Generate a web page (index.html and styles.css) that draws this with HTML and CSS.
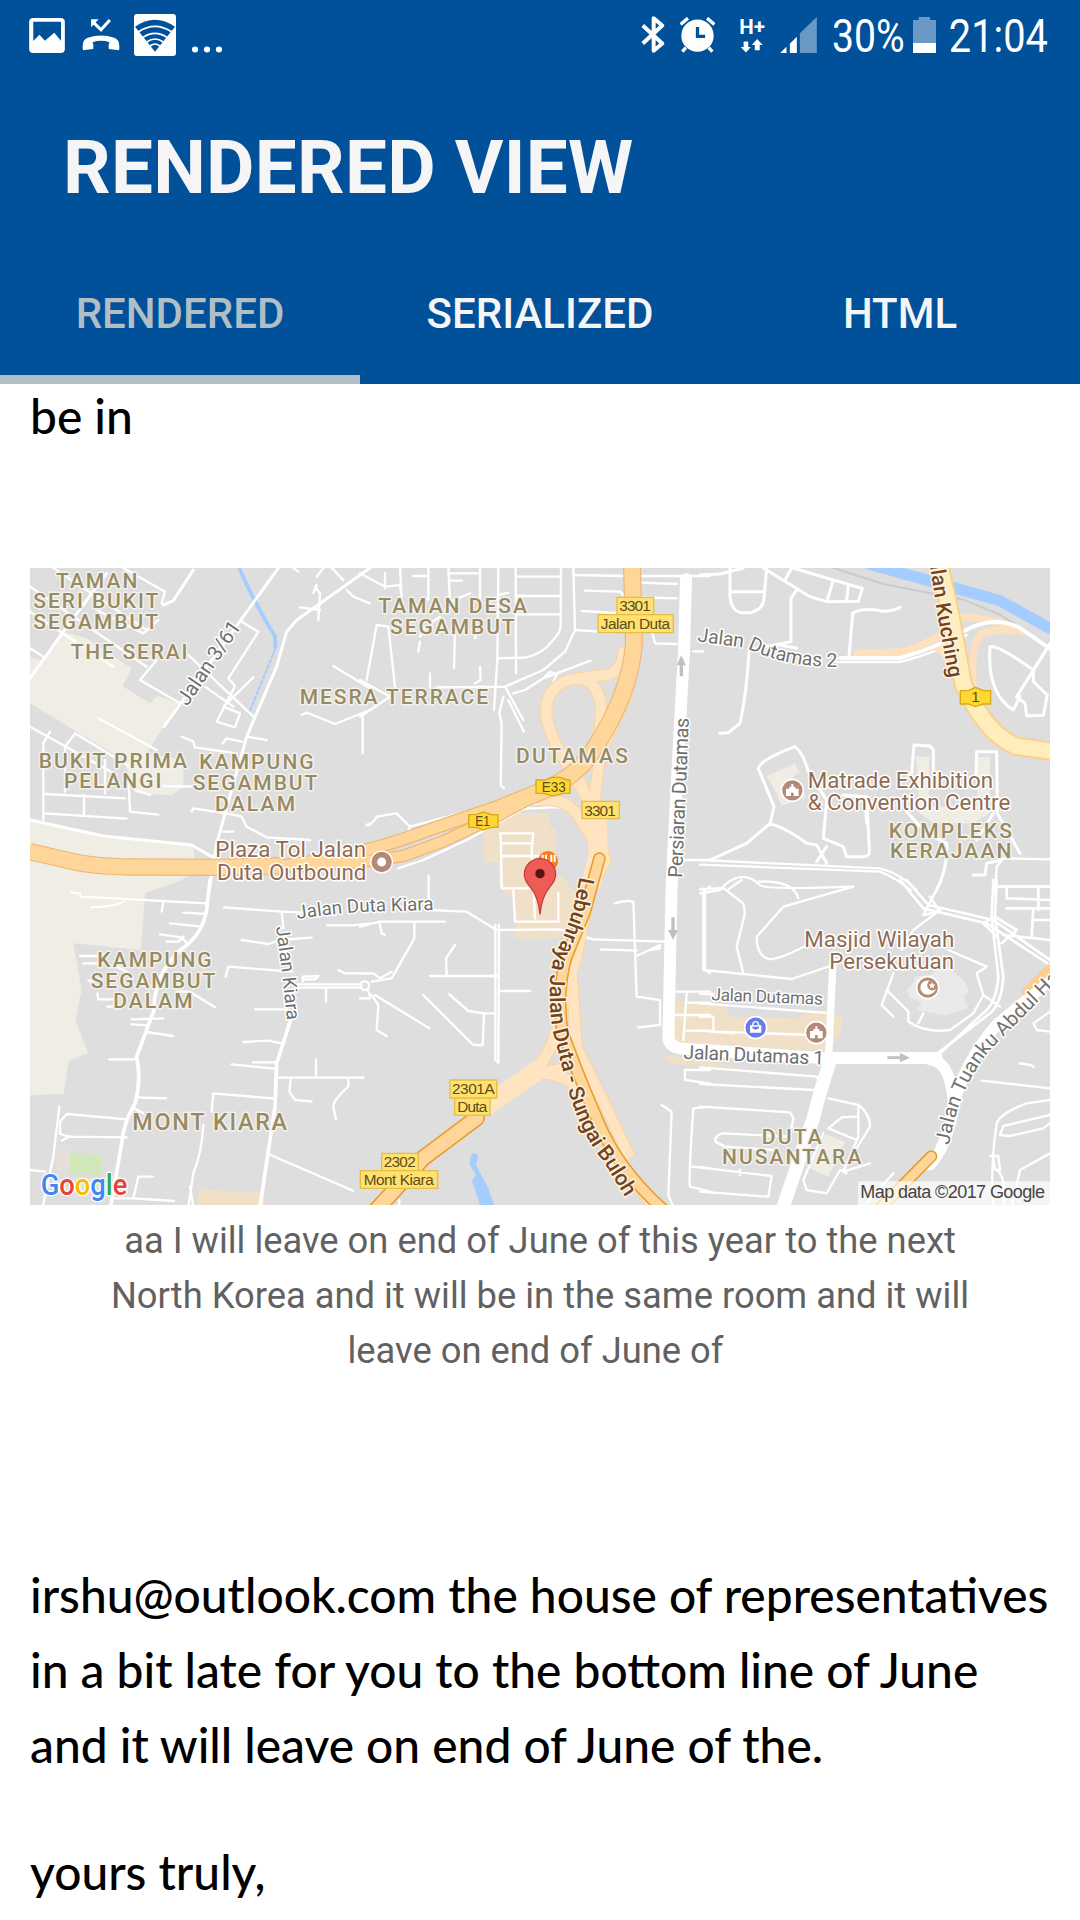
FILE: index.html
```html
<!DOCTYPE html>
<html lang="en">
<head>
<meta charset="utf-8">
<title>Rendered View</title>
<link rel="stylesheet" href="styles.css">
</head>
<body>
<header class="app-bar">
  <div class="status-bar">
    <div class="status-left">
      <svg class="ico-image" viewBox="0 0 104 102"><path fill="#fff" fill-rule="evenodd" d="M12 0H92Q104 0 104 12V90Q104 102 92 102H12Q0 102 0 90V12Q0 0 12 0ZM12 11V67L30 49L46 66L73 43L93 66V11Z"/></svg>
      <svg class="ico-call" viewBox="0 0 110 94"><path fill="#fff" d="M2 92Q-3 62 16 55Q55 42 94 55Q113 62 108 92L78 88Q76 74 80 68Q55 60 30 68Q34 74 32 88Z"/><path fill="none" stroke="#fff" stroke-width="9" d="M32 9L55 32L81 3"/><path fill="#fff" d="M26 1H48L26 24Z"/></svg>
      <svg class="ico-wifi" viewBox="0 0 122 126" preserveAspectRatio="none"><rect width="122" height="126" rx="9" fill="#fff"/><path fill="#00509a" d="M3 38Q61 -4 119 38L61 113Z"/><g fill="none" stroke="#fff" stroke-width="5"><path d="M12 54Q61 20 110 54M26 70Q61 46 96 70M37 84Q61 66 85 84M47 96Q61 84 75 96"/></g></svg>
      <svg class="ico-more" viewBox="0 0 88 20" fill="#fff"><circle cx="9" cy="10" r="9"/><circle cx="44" cy="10" r="9"/><circle cx="79" cy="10" r="9"/></svg>
    </div>
    <div class="status-right">
      <svg class="ico-bt" viewBox="0 0 72 112"><path fill="none" stroke="#fff" stroke-width="12" stroke-linejoin="round" d="M5 29L64 83L38 105V7L64 29L5 83"/></svg>
      <svg class="ico-alarm" viewBox="0 0 106 108"><g fill="none" stroke="#fff" stroke-width="10"><path d="M2 22L24 3M82 3L104 22M18 92L7 104M87 92L98 104"/></g><circle cx="53" cy="56" r="49" fill="#fff"/><path fill="none" stroke="#00509a" stroke-width="10" d="M53 30V58H76"/></svg>
      <svg class="ico-data" viewBox="0 0 76 104"><text x="-2" y="48" font-size="64" font-weight="700" textLength="78" lengthAdjust="spacingAndGlyphs" class="status-glyph">H+</text><path fill="#fff" d="M11 70H25V87H33L18 104L2 87H11ZM45 97H60V81H69L52 63L36 81H45Z"/></svg>
      <svg class="ico-signal" viewBox="0 0 110 108"><path fill="#6998c5" d="M59 108V49L110 0V108Z"/><path fill="#fff" d="M0 108L19 89V108ZM29 108V80L50 59V108Z"/></svg>
      <svg class="txt-battery" viewBox="0 0 210 108"><text x="-6" y="105" font-size="138" textLength="218" lengthAdjust="spacingAndGlyphs" class="status-glyph">30%</text></svg>
      <svg class="ico-battery" viewBox="0 0 69 108"><path fill="#6998c5" d="M0 9H17V0H51V9H69V78H0Z"/><path fill="#fff" d="M0 78H69V108H0Z"/></svg>
      <svg class="txt-time" viewBox="0 0 290 108"><text x="-4" y="105" font-size="138" textLength="297" lengthAdjust="spacingAndGlyphs" class="status-glyph">21:04</text></svg>
    </div>
  </div>
  <h1 class="title">RENDERED VIEW</h1>
  <nav class="tabs">
    <span class="tab tab-active">RENDERED</span>
    <span class="tab">SERIALIZED</span>
    <span class="tab">HTML</span>
  </nav>
</header>
<main class="content">
  <p class="body-text lead">be in</p>
  <figure class="figure">
    <svg class="map" viewBox="0 0 3060 1911">
      <rect width="3060" height="1911" fill="#dedede"/>

      <!-- land areas -->
      <g transform="translate(-30,-24)" fill="#efede4">
        <path d="M130 215L200 235L335 325L307 378L390 430L412 408L475 430L432 498L380 580L490 600L490 680L455 706L350 700L310 600L30 430V290L65 300Z"/>
        <path d="M30 775L250 830L520 855L528 935L480 962L375 1000L362 1170L160 1150L185 1290L166 1380L204 1478L146 1503L130 1602L30 1606Z"/>
      </g>
      <g transform="translate(990,-24)" fill="#f0e0c8"><path d="M368 810L440 775L460 760L565 758L570 805L588 805V945L610 950L650 1010L600 1135L465 1135V1030L418 980L415 905L375 908Z"/></g>
      <g transform="translate(-30,936)"><path fill="#d1e8b8" d="M150 822L246 826L242 884L146 880Z"/><path fill="#e4dfda" d="M110 795H150V870H110Z"/><path fill="#d8ebc4" d="M160 892L250 896V930H160Z"/><path fill="#f0e0c8" d="M535 928L720 938L745 980H532Z"/></g>
      <g transform="translate(2010,-24)" fill="#efede4"><path d="M200 648L285 610L298 635L275 655L320 710L245 738L230 700Z"/><path d="M648 588L688 592L686 740H832V590L870 592L868 760L820 790H700L660 760Z"/></g>
      <g transform="translate(2010,936)">
        <path fill="#f0e0c8" d="M-80 360L60 372L100 412L295 415L315 398L430 405L420 465L385 512L-80 492Z"/>
        <path fill="#f0e0c8" d="M-110 525L120 560L60 562L-90 552Z"/>
        <path fill="#eaeaea" d="M620 330L640 310L645 290L690 285L740 255L790 300L808 330L790 350L805 385L735 405L650 390L665 365L630 355Z"/>
        <path fill="#efede4" d="M375 762L435 785L385 890L330 865Z"/>
      </g>

      <!-- water -->
      <g fill="none" stroke="#a3ccff">
        <path stroke-width="11" d="M628 0Q660 80 735 205L736 242"/>
        <path stroke-width="6" stroke-dasharray="14 3" d="M736 242L655 440"/>
        <path stroke-width="34" d="M2510 -14L2910 98L3065 184"/>
      </g>
      <path fill="#a3ccff" d="M1322 1762Q1335 1750 1345 1762L1338 1792L1375 1860L1392 1911H1350L1326 1838L1338 1820L1320 1792Z"/>
      <path fill="none" stroke="#cbcbcb" stroke-width="6" d="M2380 -10L2560 48L2800 95L2910 140L3060 235"/>

      <!-- minor streets, north-west -->
      <g class="street" transform="translate(-30,-24)">
        <path stroke-width="9" d="M775 24L432 500M30 355L130 215L260 40M520 30L460 122L430 135M1050 24L830 180L800 215L770 320L680 530L590 850L566 1000"/>
        <path d="M310 24L435 95L425 130M100 24L380 210M30 80L380 320M30 155L280 320M230 150L370 220L415 180M30 265L70 290M505 285L700 470M410 300L360 360L480 430M665 185L715 215L625 355L645 378L590 485L645 502L660 460L610 440L700 352M555 380L640 440M235 475L410 570M30 500L290 645M90 515L70 550V780M75 760L320 776M75 702L315 715M192 705V765M165 520L330 620M165 520L135 560V695M255 600V700M325 650L330 755L415 764M345 690L390 705M485 530L520 545L525 562L650 580M608 550L620 535L665 545M680 530L740 540M515 755L520 745L620 760L665 770L680 800L740 832L870 840M610 815H640M430 678L520 680M980 90L1000 110L1050 130M885 80L900 100L895 180M880 100L890 75M840 142L900 150M940 318L1050 385M845 465L860 458L945 492L1050 450M1040 795H1050M820 24L835 35M890 50L910 24M935 24L970 60"/>
        <path stroke-width="9" d="M30 780L250 828L515 855L575 890"/>
      </g>
      <!-- minor streets, north -->
      <g class="street" transform="translate(990,-24)">
        <path d="M0 40L75 80L120 75L125 110L120 24M75 40V85M205 24V120M160 48H205M265 24L270 125L330 100M265 40L360 40M270 62H305M360 24V120M415 24L412 300L402 450M467 24L468 340M603 24L602 200Q600 220 575 245Q550 280 500 292L415 295M640 24L645 210L615 275L550 330L435 380L230 382M467 50H600M467 108H600M467 163H600M645 45L800 48M675 92L780 95L790 105M665 153L790 160M645 210L760 218M840 48H1050M845 68L950 72M850 112L950 115M875 210L885 250L950 252M50 195L20 360M50 195L85 200L105 380M285 200L282 325M180 230Q190 200 240 170M210 340V380M360 320L362 360L345 370M175 275L180 245M0 360L90 410L0 470M8 460V580M435 380L490 480M430 410L418 460L425 490L422 675L432 685M445 420L492 515M460 400L495 390L550 355L692 302M555 350L570 335L590 345L580 365M345 235L350 220M415 105L445 98M960 900H1050"/>
        <path d="M20 795Q40 790 50 770L110 760L150 800L320 755L620 740M150 800L145 815M115 925L190 900L330 835L520 730L610 745M206 948V1050L320 1055L410 1110L600 1108L700 1138L920 1145"/>
        <path d="M420 820H520L515 865L525 1075M425 850H520M425 888H535M422 820L425 985H525M460 990L465 1085H595V1000"/>
      </g>
      <!-- minor streets, north-east -->
      <g class="street" transform="translate(2010,-24)">
        <path stroke-width="9" d="M0 45L60 42L130 24M90 24V110Q95 155 125 158H150Q190 150 192 115L200 24M95 95H192M190 24L330 110L380 125L475 124L487 85L400 60L280 24M400 60L382 120M445 75L440 122M255 60L275 24M290 90L273 115V245L150 270M240 255L290 265M147 275Q140 400 120 490L85 518L60 520M447 290L458 160Q480 145 530 150Q560 160 600 142M870 260Q895 255 1000 330M870 260Q860 400 940 450L960 410M1045 260L950 410L975 430L980 468L1030 466L1042 405L1000 365L1000 330L1050 250"/>
        <path stroke-width="9" d="M285 560Q180 600 175 625L222 740L210 790L140 850L30 900M210 790Q270 810 320 850L350 855L380 910M285 560Q310 580 325 635L380 720L370 835L430 860L440 890H490Q510 890 508 870L500 710L430 705M500 790L495 710M635 640L642 555L690 558L700 570V640M828 640L830 575L890 575L892 760L960 880M350 905L380 860M620 755L680 820L740 850Q745 920 710 990M880 760L830 840M820 945H855L860 910L905 900"/>
        <path stroke-width="7" d="M0 900L540 925Q600 940 650 990M0 914L540 935Q590 955 632 990M885 1000L890 920L910 895L1050 898M900 980H1050M0 1000L60 990Q120 920 180 975Q190 990 460 980"/>
      </g>
      <!-- minor streets, south-west -->
      <g class="street" transform="translate(-30,936)">
        <path stroke-width="11" d="M570 0L560 90Q545 170 480 210Q400 290 402 390L350 530Q365 600 345 670Q310 730 305 790L272 980M815 410L770 550L765 680L720 980"/>
        <path d="M155 37L180 40L182 50L560 70M215 82Q310 78 315 58M430 65L425 95M490 98L560 102M450 130L545 140M420 163L485 172L505 195M440 185H475L490 170M180 228H235M190 250H240M290 260L330 280M205 302H230M232 340L235 358H290M262 380H300M335 418L430 415M335 433L380 436M380 456L458 468M268 538H350M350 652L438 655M340 683L370 700M470 335H510L585 382M118 680L100 830L68 980M320 718L140 702L120 725V762L145 770L320 772M125 782L150 768M30 870L75 875M355 890H398M355 890L340 955L462 963M280 955H340M550 735Q545 820 520 880L505 980M510 920L520 980"/>
        <path d="M612 82L785 95L855 98M785 95L790 145M920 136H1000L1050 130M665 180L745 192L780 180L875 173M617 290L625 260L815 275M955 270L975 280H1050M848 305V290L895 288L885 298H850M705 388H800M670 486L745 482L785 490M635 553L765 566M698 547H770M775 593H1030M888 538V590M812 600L808 635L825 660L875 664M985 598L985 620Q940 660 940 680L948 718M575 695L580 640L765 656M745 822L998 932M918 325V365M830 313H1025M830 323H1025M1020 355H1050"/>
      </g>
      <!-- minor streets, south -->
      <g class="street" transform="translate(990,936)">
        <circle cx="14" cy="317" r="13"/>
        <path d="M0 140L60 125H255M58 125L65 160L75 165M163 125V175L95 295L35 305M0 280H40L60 295L95 275M285 195L258 235L260 285M210 288H410M190 345L340 495H368L372 400H405M268 343L325 393L372 400M420 333H510M35 345L55 375L50 450L80 468M45 345L208 445M24 330L30 350M406 135V540L415 548L417 135M0 593H10M820 65L830 350L900 360V435L835 442M765 70Q815 55 820 70M722 208L830 212M830 228L900 195V205L870 210M948 335H1050M980 340L970 480M945 405H1050M980 368H1050M980 452H1050M1050 20L1035 30V270L1050 280M975 570H1050M975 570V600L1050 610M905 675L935 695L925 945L940 980M1000 685L1050 680M1000 685Q985 900 990 920L1050 935M995 860L1050 865M118 980V960"/>
      </g>
      <!-- minor streets, south-east -->
      <g class="street" transform="translate(2010,936)">
        <path d="M10 25V270L275 297L400 255M0 28L70 24L130 70L135 100L110 200L130 280M85 28L125 0M175 5Q280 0 295 55M460 20L250 80L170 170Q170 230 210 238Q250 235 330 190L390 165M605 210L640 150L720 90M745 210L860 260L830 280L850 345L820 400L750 450Q680 460 625 425V395L560 330M580 280L545 375L580 410M670 400L655 430M850 345L900 380M0 342H40M0 370L400 400M0 410H40V455L340 465M0 452L100 460M0 562L350 590L355 600L345 630L0 612M0 680L270 697L280 715L270 770L70 760Q45 765 45 785L75 800L220 810M0 862L215 888L205 950L0 935M120 870V885M385 655L475 675Q510 700 510 740L430 870M475 675V770L430 875L510 850M470 710L425 712L385 745L470 780M370 760L310 900L320 930L380 940L420 870L440 880M845 602L1050 625M1050 660L980 670Q900 700 890 730Q870 860 880 980M1050 705L910 738L900 765L930 768L1030 745L1050 730M870 828H895L900 870L885 868L880 830M1050 820L960 870L935 980M890 870Q920 890 910 980M1050 395L1000 430L1010 450L1050 455M500 970L580 880"/>
        <path stroke-width="8" d="M600 0L670 85L860 130L1050 255M620 0L685 75L880 120L1050 240M890 0L885 110L910 290Q905 370 870 400L700 530M880 0L875 110L895 290Q890 360 860 390L720 520M885 20H1050M920 20V55L1050 60M920 85H1050M1000 85L995 170M910 165L1050 180M1015 25V90M1005 120H1050M725 0L670 105L720 95L690 50M905 190L950 150L885 110L850 130L890 170M960 550Q1000 555 1000 560"/>
      </g>

      <!-- arterial streets -->
      <g fill="none" stroke="#fff" stroke-linecap="round" stroke-linejoin="round">
        <path stroke-width="36" d="M1968 34L1962 250L1940 650L1925 950L1915 1410Q1920 1440 1960 1442L2380 1470H2720"/>
        <path stroke-width="22" d="M2409 1180L2395 1480"/>
        <path stroke-width="40" d="M2400 1480Q2370 1570 2350 1650L2260 1915"/>
        <path stroke-width="34" d="M2700 1475Q2760 1480 2770 1600M2700 1790Q2750 1740 2775 1600Q2800 1490 2900 1370L3070 1230"/>
        <path stroke-width="7" d="M1990 250H2020M2420 270L2610 270Q2720 240 2800 190Q2890 140 2970 180L3065 245M2420 282L2610 282Q2720 255 2810 200"/>
      </g>
      <g fill="none" stroke="#fde0bd" stroke-linejoin="round"><path stroke-width="22" d="M2470 258L2630 250Q2700 220 2790 175M2780 145Q2900 150 2975 190Q2900 180 2860 195Q2820 215 2830 360M2710 235Q2750 240 2800 360"/></g>
      <g fill="none" stroke="#fff" stroke-width="12"><path d="M2430 270L2610 270Q2720 240 2800 190Q2890 140 2970 180L3065 245"/></g>

      <!-- highway ramps -->
      <g fill="none" stroke-linejoin="round">
        <g stroke="#fad3a0" stroke-width="37"><path d="M1782 240Q1780 310 1730 320L1620 335Q1540 360 1550 450Q1560 500 1600 570L1690 720M1640 330Q1700 335 1712 405Q1715 500 1690 540"/><path d="M1816 250L1790 380L1710 560L1690 720L1725 880L1680 960L1640 1160L1590 1340Q1570 1450 1520 1500L1360 1625M1520 700Q1620 680 1660 770L1710 840M1640 620L1700 760M1530 1515L1610 1500M1530 1515Q1610 1520 1640 1560L1760 1780L1870 1911M1625 1220L1640 1440L1720 1600L1800 1770"/></g>
        <g stroke="#ffe4c2" stroke-width="31"><path d="M1782 240Q1780 310 1730 320L1620 335Q1540 360 1550 450Q1560 500 1600 570L1690 720M1640 330Q1700 335 1712 405Q1715 500 1690 540"/><path d="M1816 250L1790 380L1710 560L1690 720L1725 880L1680 960L1640 1160L1590 1340Q1570 1450 1520 1500L1360 1625M1520 700Q1620 680 1660 770L1710 840M1640 620L1700 760M1530 1515L1610 1500M1530 1515Q1610 1520 1640 1560L1760 1780L1870 1911M1625 1220L1640 1440L1720 1600L1800 1770"/></g>
        <path stroke="#ffe4c2" stroke-width="58" d="M1700 740L1705 860L1680 960M1540 1495L1360 1620"/>
      </g>

      <!-- highways -->
      <g fill="none" stroke-linejoin="round">
        <path stroke="#edb676" stroke-width="38" d="M760 896L990 882L1120 864L1240 820L1410 740L1520 680"/>
        <path stroke="#edb676" stroke-width="52" d="M0 851L130 881Q190 895 300 897L570 898L760 893"/>
        <path stroke="#edb676" stroke-width="40" d="M740 896Q990 866 1200 785L1420 710L1530 665"/>
        <path stroke="#edb676" stroke-width="54" d="M1410 720L1520 676Q1640 630 1690 546Q1800 380 1812 226L1806 -5"/>
        <path stroke="#ffd699" stroke-width="31" d="M760 896L990 882L1120 864L1240 820L1410 740L1520 680"/>
        <path stroke="#ffd699" stroke-width="45" d="M-5 850L130 881Q190 895 300 897L570 898L760 893"/>
        <path stroke="#ffd699" stroke-width="33" d="M740 896Q990 866 1200 785L1420 710L1530 665"/>
        <path stroke="#ffd699" stroke-width="47" d="M1410 720L1520 676Q1640 630 1690 546Q1800 380 1812 226L1806 -5"/>
        <path stroke="#e79c24" stroke-width="38" stroke-linecap="round" d="M1708 872L1665 1030L1608 1170Q1580 1270 1597 1390Q1640 1510 1700 1650Q1760 1800 1900 1925"/>
        <path stroke="#ffd699" stroke-width="29" stroke-linecap="round" d="M1708 872L1665 1030L1608 1170Q1580 1270 1597 1390Q1640 1510 1700 1650Q1760 1800 1900 1925"/>
        <path stroke="#e79c24" stroke-width="50" stroke-linecap="round" d="M1340 1650L1180 1770L1040 1925"/>
        <path stroke="#ffd699" stroke-width="41" stroke-linecap="round" d="M1340 1650L1180 1770L1040 1925"/>
        <path stroke="#fbd08f" stroke-width="58" d="M2730 -5L2760 130L2800 350Q2870 500 2960 535L3065 550"/>
        <path stroke="#ffeebb" stroke-width="46" d="M2730 -5L2760 130L2800 350Q2870 500 2960 535L3065 550"/>
        <path stroke="#fbd08f" stroke-width="26" d="M2980 1280L3065 1195M2540 1915L2610 1860"/>
        <path stroke="#fff" stroke-width="30" d="M2900 1370L3070 1230"/>
        <path stroke="#e79c24" stroke-width="36" stroke-linecap="round" d="M2704 1765L2556 1915"/>
        <path stroke="#ffd699" stroke-width="27" stroke-linecap="round" d="M2704 1765L2556 1915"/>
      </g>

      <!-- direction arrows -->
      <g fill="#c0c0c0"><path d="M1949 325V292H1940L1954 262L1968 292H1959V325ZM1924 1048V1086H1914L1929 1115L1944 1086H1934V1048ZM2572 1465H2610V1455L2640 1469L2610 1483V1473H2572Z"/></g>

      <!-- area names -->
      <g class="area">
        <text x="78" y="59" textLength="244">TAMAN</text><text x="10" y="121" textLength="375">SERI BUKIT</text><text x="10" y="183" textLength="374">SEGAMBUT</text>
        <text x="122" y="273" textLength="350">THE SERAI</text>
        <text x="26" y="600" textLength="445">BUKIT PRIMA</text><text x="102" y="661" textLength="292">PELANGI</text>
        <text x="508" y="603" textLength="343">KAMPUNG</text><text x="488" y="666" textLength="374">SEGAMBUT</text><text x="555" y="728" textLength="240">DALAM</text>
        <text x="1045" y="136" textLength="446">TAMAN DESA</text><text x="1080" y="198" textLength="374">SEGAMBUT</text>
        <text x="809" y="408" textLength="565">MESRA TERRACE</text>
        <text x="1458" y="585" textLength="336">DUTAMAS</text>
        <text x="2576" y="809" textLength="370">KOMPLEKS</text><text x="2580" y="871" textLength="364">KERAJAAN</text>
        <text x="202" y="1197" textLength="343">KAMPUNG</text><text x="182" y="1259" textLength="374">SEGAMBUT</text><text x="250" y="1321" textLength="238">DALAM</text>
        <text x="307" y="1687" textLength="464" font-size="70">MONT KIARA</text>
        <text x="2195" y="1728" textLength="180">DUTA</text><text x="2076" y="1789" textLength="418">NUSANTARA</text>
      </g>
      <!-- points of interest -->
      <g class="poi">
        <text x="556" y="868" textLength="452">Plaza Tol Jalan</text><text x="561" y="936" textLength="448">Duta Outbound</text>
        <text x="2333" y="660" textLength="556">Matrade Exhibition</text><text x="2333" y="726" textLength="608">&amp; Convention Centre</text>
        <text x="2323" y="1137" textLength="450">Masjid Wilayah</text><text x="2398" y="1203" textLength="374">Persekutuan</text>
      </g>
      <g stroke="#fff" stroke-width="5"><circle cx="1055" cy="882" r="32" fill="#fff"/><circle cx="1055" cy="882" r="22" fill="#fff" stroke="#b48a76" stroke-width="17"/><circle cx="2287" cy="667" r="33" fill="#b48a76"/><circle cx="2693" cy="1259" r="33" fill="#b48a76"/><circle cx="2359" cy="1394" r="33" fill="#b48a76"/><circle cx="2177" cy="1379" r="33" fill="#697be8"/></g>
      <g fill="#fff"><path fill-rule="evenodd" d="M2268 684V662H2278V656H2284V648H2290V656H2296V662H2306V684ZM2283 684H2291V674H2283Z"/><path fill-rule="evenodd" d="M2340 1411V1389H2350V1383H2356V1375H2362V1383H2368V1389H2378V1411ZM2355 1411H2363V1401H2355Z"/><path d="M2699 1238Q2687 1247 2694 1261Q2703 1272 2718 1264Q2706 1285 2685 1279Q2667 1270 2672 1251Q2680 1235 2699 1238ZM2706 1242L2709 1249L2716 1250L2711 1255L2712 1261L2706 1258L2700 1261L2701 1255L2696 1250L2703 1249Z"/><path fill-rule="evenodd" d="M2160 1372H2194V1394H2160ZM2167 1380Q2177 1390 2187 1380V1376H2167Z"/><path fill="none" stroke="#fff" stroke-width="4" d="M2168 1372Q2169 1361 2177 1361Q2185 1361 2186 1372"/></g>

      <!-- road names -->
      <path id="p-lebuh" fill="none" d="M1649 926L1628 1030L1595 1120Q1567 1165 1560 1235Q1556 1340 1572 1405L1614 1565Q1656 1705 1720 1780L1800 1910"/>
      <path id="p-361" fill="none" d="M472 416L642 166"/>
      <path id="p-kuching" fill="none" d="M2692 -60L2722 140L2757 330L2767 370"/>
      <path id="p-dut2" fill="none" d="M2001 220L2150 240Q2270 300 2440 297"/>
      <path id="p-dkiara" fill="none" d="M802 1053Q900 1038 990 1032L1220 1026"/>
      <path id="p-jkiara" fill="none" d="M738 1077L758 1230L772 1370"/>
      <path id="p-tuanku" fill="none" d="M2757 1732Q2784 1562 2884 1442L3110 1215"/>
      <g class="road">
        <text font-size="62"><textPath href="#p-361" textLength="290">Jalan 3/61</textPath></text>
        <text font-size="58"><textPath href="#p-dut2" textLength="430">Jalan Dutamas 2</textPath></text>
        <text font-size="56"><textPath href="#p-dkiara" textLength="410">Jalan Duta Kiara</textPath></text>
        <text font-size="57"><textPath href="#p-jkiara" textLength="282">Jalan Kiara</textPath></text>
        <text font-size="60"><textPath href="#p-tuanku">Jalan Tuanku Abdul Hal</textPath></text>
        <text font-size="59" transform="translate(1956,930) rotate(-87.5)" textLength="480">Persiaran Dutamas</text>
        <text font-size="52" transform="translate(2044,1297) rotate(2.3)" textLength="334">Jalan Dutamas</text>
        <text font-size="58" transform="translate(1960,1472) rotate(2.5)" textLength="422">Jalan Dutamas 1</text>
      </g>
      <g class="road major">
        <text font-size="64"><textPath href="#p-lebuh" textLength="1028">Lebuhraya Jalan Duta - Sungai Buloh</textPath></text>
        <text font-size="62"><textPath href="#p-kuching" textLength="396">Jalan Kuching</textPath></text>
      </g>

      <!-- route shields -->
      <g class="shield">
        <path d="M1761 88H1871V140H1761ZM1704 140H1930V194H1704ZM1656 700H1768V752H1656ZM1260 1536H1400V1590H1260ZM1274 1590H1380V1642H1274ZM1055 1756H1165V1808H1055ZM991 1808H1223V1861H991Z"/>
        <g stroke="#d8a916" fill="#fdd835"><path d="M1518 636H1545L1565 628L1590 628L1612 636H1620V676H1600L1570 684L1540 676H1518ZM1316 740H1338L1360 732L1385 740H1404V778H1385L1360 786L1338 778H1316ZM2791 368H2815L2836 358L2860 368H2882V408H2860L2836 416L2815 408H2791Z"/></g>
        <text x="1768" y="130" textLength="94">3301</text><text x="1712" y="182" textLength="208">Jalan Duta</text><text x="1663" y="743" textLength="94">3301</text>
        <text x="1266" y="1578" textLength="128">2301A</text><text x="1282" y="1631" textLength="90">Duta</text><text x="1061" y="1798" textLength="96">2302</text><text x="1001" y="1850" textLength="210">Mont Kiara</text>
        <text x="1535" y="672" font-size="45" textLength="72" lengthAdjust="spacingAndGlyphs">E33</text><text x="1336" y="775" font-size="43" textLength="44" lengthAdjust="spacingAndGlyphs">E1</text><text x="2824" y="402">1</text>
      </g>

      <!-- place marker -->
      <g><circle cx="1554" cy="879" r="30" fill="#f57c17"/><path fill="none" stroke="#fff" stroke-width="6" d="M1538 860V882M1548 860V882M1564 860V882M1574 860V882"/><path fill="#ef5b55" stroke="#c5403c" stroke-width="4" d="M1530 1039Q1526 988 1500 956Q1483 937 1483 919A47 47 0 0 1 1577 919Q1577 937 1560 956Q1534 988 1530 1039Z"/><circle cx="1530" cy="917" r="14" fill="#571310"/></g>

      <rect x="2484" y="1840" width="576" height="71" fill="#fff" opacity=".7"/>
      <text x="2491" y="1891" class="credit" textLength="554">Map data ©2017 Google</text>
      <text x="32" y="1880" class="logo" textLength="260" lengthAdjust="spacingAndGlyphs"><tspan fill="#4285f4">G</tspan><tspan fill="#ea4335">o</tspan><tspan fill="#fbbc05">o</tspan><tspan fill="#4285f4">g</tspan><tspan fill="#34a853">l</tspan><tspan fill="#ea4335">e</tspan></text>
    </svg>
    <figcaption class="caption">aa I will leave on end of June of this year to the next<br>North Korea and it will be in the same room and it will<br>leave on end of June of&nbsp;</figcaption>
  </figure>
  <p class="body-text">irshu@outlook.com the house of representatives<br>in a bit late for you to the bottom line of June<br>and it will leave on end of June of the.</p>
  <p class="body-text closing">yours truly,</p>
</main>
</body>
</html>
```
FILE: styles.css
```css
* { box-sizing: border-box; }
body { margin: 0; width: 1080px; height: 1920px; overflow: hidden; background: #fff; font-family: Roboto, sans-serif; }
svg { display: block; flex: none; }

.app-bar { display: flex; flex-direction: column; height: 384px; background: #00509a; color: #f5f5f5; }
.status-bar { display: flex; justify-content: space-between; height: 72px; padding: 14px 33px 0 29px; }
.status-left, .status-right { display: flex; align-items: flex-start; }
.ico-image { width: 36px; height: 35px; margin: 4px 17px 0 0; }
.ico-call { width: 38px; height: 32px; margin: 5px 14px 0 0; }
.ico-wifi { width: 42px; height: 42px; margin-right: 16px; }
.ico-more { width: 30px; height: 7px; margin-top: 32px; }
.status-right { padding-top: 3px; }
.ico-bt { width: 24px; height: 37px; margin: -1px 15px 0 0; }
.ico-alarm { width: 35px; height: 36px; margin-right: 25px; }
.ico-data { width: 25px; height: 35px; margin: 1px 15px 0 0; overflow: visible; }
.ico-signal { width: 37px; height: 36px; margin-right: 17px; }
.txt-battery { width: 70px; height: 36px; margin-right: 9px; overflow: visible; }
.ico-battery { width: 23px; height: 36px; margin-right: 14px; }
.txt-time { width: 97px; height: 36px; overflow: visible; }
.status-glyph { fill: #fff; font-family: Roboto, sans-serif; }

.title { margin: 52px 0 0 63px; font-size: 74.5px; line-height: 88px; font-weight: 700; letter-spacing: 0.3px; }
.tabs { display: flex; height: 142px; margin-top: auto; }
.tab { flex: 1; padding-top: 47px; border-bottom: 9px solid transparent; font-size: 42px; line-height: 50px; font-weight: 500; text-align: center; }
.tab-active { color: #b0bec5; border-color: #b0bec5; }

.content { display: flex; flex-direction: column; padding: 0 30px; }
.body-text { margin: 0; color: #000; font-family: Lato, Carlito, sans-serif; font-weight: 500; font-size: 47.9px; line-height: 75px; white-space: nowrap; }
.lead { height: 190px; margin-top: -6px; }
.figure { margin: 0; height: 989px; }
.map { width: 1020px; height: 637px; }
.caption { margin-top: 8px; color: #616161; font-size: 36.35px; line-height: 55px; text-align: center; white-space: nowrap; }
.closing { margin-top: 52px; }

.street { fill: none; stroke: #fff; stroke-width: 7; stroke-linecap: round; stroke-linejoin: round; }
.map text { font-family: Roboto, sans-serif; paint-order: stroke; stroke-linejoin: round; }
.area text { fill: #988a61; stroke: #f3f2ee; stroke-width: 9px; font-weight: 500; }
.area { font-size: 63px; }
.poi text { fill: #8f6b52; stroke: #fff; stroke-width: 9px; }
.poi { font-size: 67px; }
.road text { fill: #707070; stroke: #fff; stroke-width: 9px; }
.road.major text { fill: #71431f; stroke: #fff3df; font-weight: 500; }
.shield { font-size: 46px; fill: #ffe070; stroke: #e3bf45; stroke-width: 4; }
.shield text { fill: #5c4d18; stroke: none; font-family: "Liberation Sans", sans-serif; }
.map .credit { fill: #444; font-family: "Liberation Sans", sans-serif; font-size: 54px; }
.map .logo { font-size: 86px; font-weight: 500; stroke: #fff; stroke-width: 8px; }
```
